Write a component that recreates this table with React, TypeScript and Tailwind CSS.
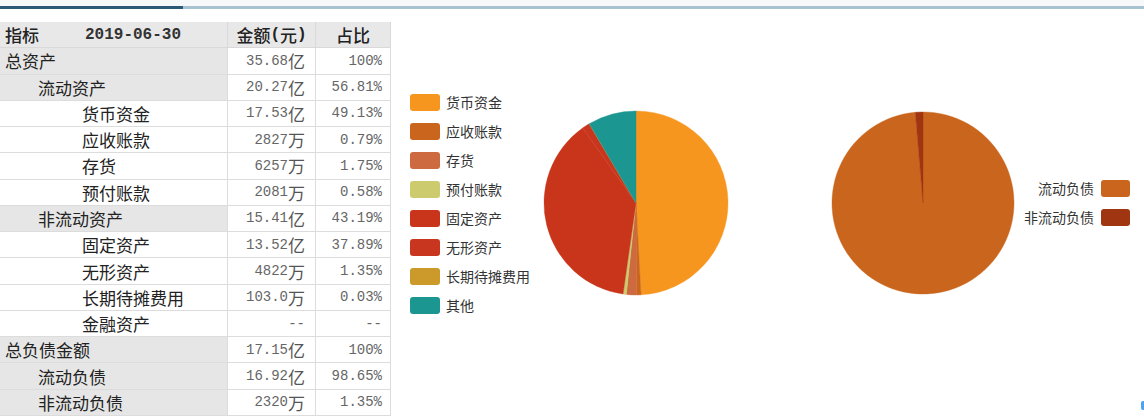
import React from "react";

type Row = { label: string; level: 0 | 1 | 2; amount: string; pct: string; gray: boolean };

const rows: Row[] = [
  { label: "总资产", level: 0, amount: "35.68亿", pct: "100%", gray: true },
  { label: "流动资产", level: 1, amount: "20.27亿", pct: "56.81%", gray: true },
  { label: "货币资金", level: 2, amount: "17.53亿", pct: "49.13%", gray: false },
  { label: "应收账款", level: 2, amount: "2827万", pct: "0.79%", gray: false },
  { label: "存货", level: 2, amount: "6257万", pct: "1.75%", gray: false },
  { label: "预付账款", level: 2, amount: "2081万", pct: "0.58%", gray: false },
  { label: "非流动资产", level: 1, amount: "15.41亿", pct: "43.19%", gray: true },
  { label: "固定资产", level: 2, amount: "13.52亿", pct: "37.89%", gray: false },
  { label: "无形资产", level: 2, amount: "4822万", pct: "1.35%", gray: false },
  { label: "长期待摊费用", level: 2, amount: "103.0万", pct: "0.03%", gray: false },
  { label: "金融资产", level: 2, amount: "--", pct: "--", gray: false },
  { label: "总负债金额", level: 0, amount: "17.15亿", pct: "100%", gray: true },
  { label: "流动负债", level: 1, amount: "16.92亿", pct: "98.65%", gray: true },
  { label: "非流动负债", level: 1, amount: "2320万", pct: "1.35%", gray: true },
];

const cjk = { fontFamily: '"Noto Sans CJK SC", "Noto Sans", sans-serif' };
const mono = { fontFamily: '"Liberation Mono", "DejaVu Sans Mono", monospace' };

function Mixed({ text, monoClass }: { text: string; monoClass: string }) {
  const parts = text.split(/([\x00-\x7F]+)/).filter((p) => p.length > 0);
  return (
    <>
      {parts.map((p, i) =>
        /^[\x00-\x7F]+$/.test(p) ? (
          <span key={i} className={monoClass} style={mono}>
            {p}
          </span>
        ) : (
          <span key={i}>{p}</span>
        )
      )}
    </>
  );
}

const assetSlices = [
  { name: "货币资金", v: 49.13, c: "#f7961f" },
  { name: "应收账款", v: 0.79, c: "#c9651c" },
  { name: "存货", v: 1.75, c: "#cd6a3f" },
  { name: "预付账款", v: 0.58, c: "#cccb6d" },
  { name: "固定资产", v: 37.89, c: "#c9351a" },
  { name: "无形资产", v: 1.35, c: "#c9361f" },
  { name: "长期待摊费用", v: 0.03, c: "#cc9a2b" },
  { name: "其他", v: 8.48, c: "#1c9690" },
];

const liabSlices = [
  { name: "流动负债", v: 98.65, c: "#c9651c" },
  { name: "非流动负债", v: 1.35, c: "#a03511" },
];

function Pie({ slices, r }: { slices: { v: number; c: string }[]; r: number }) {
  const total = slices.reduce((s, x) => s + x.v, 0);
  const size = r * 2 + 6;
  const cx = size / 2;
  const cy = size / 2;
  let acc = 0;
  return (
    <svg width={size} height={size} viewBox={`0 0 ${size} ${size}`}>
      {slices.map((s, i) => {
        const a0 = (acc / total) * Math.PI * 2;
        acc += s.v;
        const a1 = (acc / total) * Math.PI * 2;
        const x0 = cx + r * Math.sin(a0);
        const y0 = cy - r * Math.cos(a0);
        const x1 = cx + r * Math.sin(a1);
        const y1 = cy - r * Math.cos(a1);
        const large = a1 - a0 > Math.PI ? 1 : 0;
        const d = `M${cx},${cy} L${x0},${y0} A${r},${r} 0 ${large} 1 ${x1},${y1} Z`;
        return <path key={i} d={d} fill={s.c} stroke={s.c} strokeWidth={0.4} />;
      })}
    </svg>
  );
}

export default function App() {
  const rowH = "h-[26.27px]";
  const pad = ["pl-[5px]", "pl-[38px]", "pl-[82px]"];
  return (
    <div className="relative w-[1144px] h-[416px] overflow-hidden bg-white" style={cjk}>
      {/* top rule */}
      <div className="h-[22px] flex flex-col">
        <div className="h-[6px] bg-[#f6f8f9]" />
        <div className="flex h-[3px]">
          <div className="w-[183px] bg-[#2c5976]" />
          <div className="flex-1 bg-[#a7c2d0]" />
        </div>
        <div className="flex-1 bg-white" />
      </div>

      <div className="flex">
        {/* table */}
        <div className="w-[391px] flex flex-col text-[17px] text-[#222] leading-none">
          <div className={`flex ${rowH} bg-[#e8e8e8] border-b border-[#d9d9d9]`}>
            <div className="w-[228px] flex items-center border-r border-[#d9d9d9] pl-[5px]">
              <span className="font-medium">指标</span>
              <span className="ml-[46px] text-[16px] font-bold text-[#333]" style={mono}>
                2019-06-30
              </span>
            </div>
            <div className="w-[88px] flex items-center justify-center border-r border-[#d9d9d9] font-medium">
              <Mixed text="金额(元)" monoClass="text-[16px] font-bold" />
            </div>
            <div className="flex-1 flex items-center justify-center border-r border-[#d9d9d9] font-medium">
              占比
            </div>
          </div>
          {rows.map((r, i) => (
            <div key={i} className={`flex ${rowH} border-b border-[#dcdcdc]`}>
              <div
                className={`w-[228px] flex items-center border-r border-[#dcdcdc] ${pad[r.level]} ${
                  r.gray ? "bg-[#e6e6e6]" : "bg-white"
                }`}
              >
                {r.label}
              </div>
              <div className="w-[88px] flex items-center justify-end pr-[10px] border-r border-[#dcdcdc] text-[#555]">
                <Mixed text={r.amount} monoClass="text-[14px] text-[#666]" />
              </div>
              <div className="flex-1 flex items-center justify-end pr-[8px] border-r border-[#dcdcdc] text-[#555]">
                <Mixed text={r.pct} monoClass="text-[14px] text-[#666]" />
              </div>
            </div>
          ))}
        </div>

        {/* charts */}
        <div className="flex flex-1">
          <div className="ml-[19px] mt-[66px] w-[131px] flex flex-col">
            {assetSlices.map((s) => (
              <div key={s.name} className="h-[29px] flex items-center">
                <div className="w-[30px] h-[17px] rounded-[3px]" style={{ backgroundColor: s.c }} />
                <span className="ml-[6px] text-[14px] text-[#333]">{s.name}</span>
              </div>
            ))}
          </div>
          <div className="mt-[86px]">
            <Pie slices={assetSlices} r={92} />
          </div>
          <div className="ml-[98px] mt-[87px]">
            <Pie slices={liabSlices} r={91} />
          </div>
          <div className="w-[113px] mt-[152px] flex flex-col">
            {liabSlices.map((s) => (
              <div key={s.name} className="h-[29px] flex items-center justify-end">
                <span className="mr-[7px] text-[14px] text-[#333]">{s.name}</span>
                <div className="w-[29px] h-[17px] rounded-[3px]" style={{ backgroundColor: s.c }} />
              </div>
            ))}
          </div>
        </div>
      </div>

      <div className="absolute right-0 top-[401px] w-[3px] h-[9px] bg-[#4da3f0] rounded-l-[2px]" />
    </div>
  );
}
